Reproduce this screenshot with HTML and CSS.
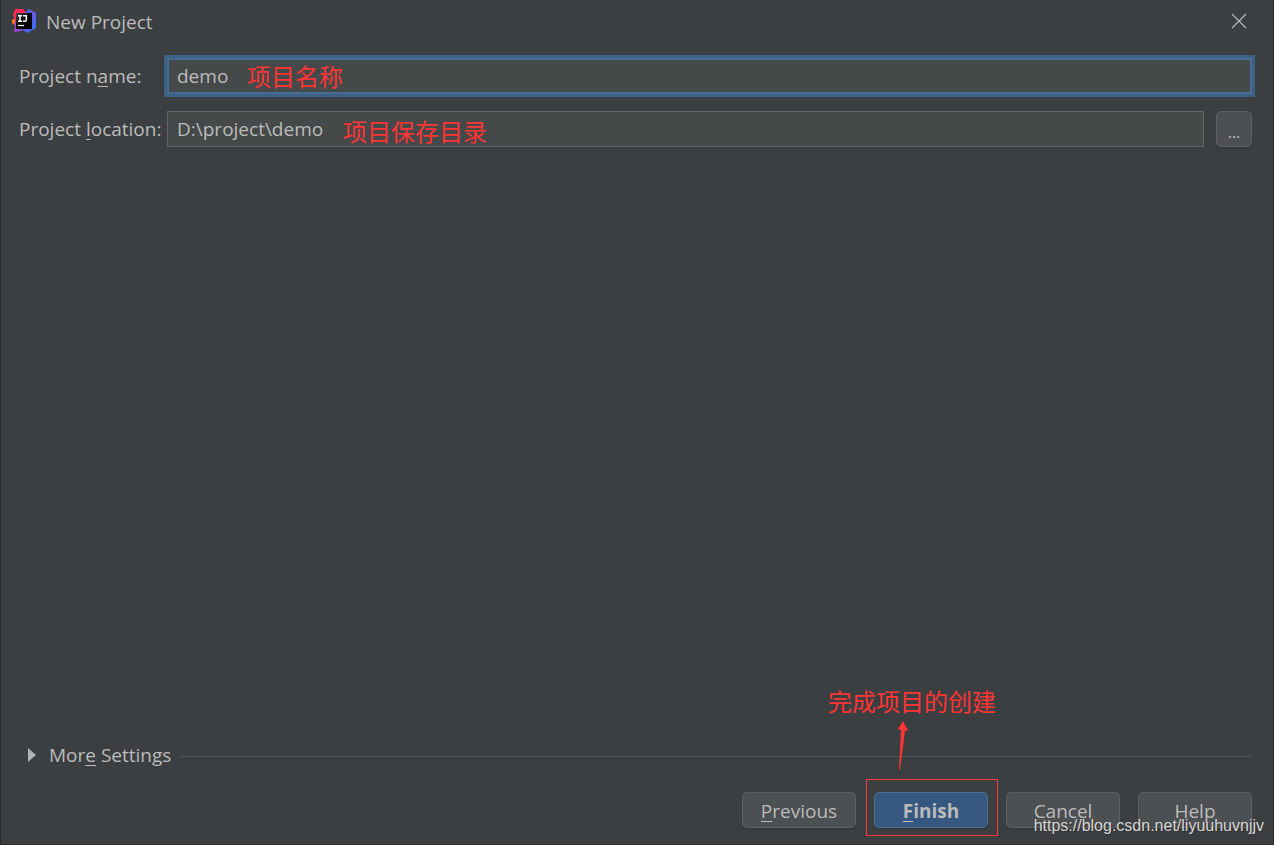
FILE: index.html
```html
<!DOCTYPE html>
<html lang="en">
<head>
<meta charset="utf-8">
<title>New Project</title>
<link rel="stylesheet" href="styles.css">
</head>
<body>
<div class="dialog">
  <header class="titlebar">
    <svg class="logo" viewBox="0 0 24 24" aria-hidden="true">
      <defs>
        <linearGradient id="blue" x1="0" y1="0" x2="1" y2="1"><stop offset="0" stop-color="#3b6cf0"/><stop offset=".5" stop-color="#6b57e8"/><stop offset="1" stop-color="#1f7cf5"/></linearGradient>
        <linearGradient id="purple" x1="0" y1="0" x2="1" y2="1"><stop offset="0" stop-color="#e8358a"/><stop offset=".5" stop-color="#a63fd6"/><stop offset="1" stop-color="#6b57e8"/></linearGradient>
        <linearGradient id="ink" x1="0" y1="0" x2="1" y2="1"><stop offset="0" stop-color="#4a4a4a"/><stop offset=".45" stop-color="#0a0a0a"/><stop offset="1" stop-color="#000"/></linearGradient>
      </defs>
      <path d="M0 11 5 8 6 18 0 14Z" fill="#fc801d"/>
      <path d="M2 13 8 10 14 19 9 22 2 23 3 18Z" fill="url(#purple)"/>
      <path d="M3 0h8l4 5-5 8-7-1-2-6Z" fill="#ff2857"/>
      <path d="M12 5 17 0l7 4v15l-9 5-7-5Z" fill="url(#blue)"/>
      <path d="M4 4h16v16H4Z" fill="url(#ink)"/>
      <path d="M6 6.700h4M8 6.700v5.500M6 12.200h4M11 6.700h3.300v4q0 1.500-1.500 1.500H10.800" fill="none" stroke="#fff" stroke-width="1.500"/>
      <path d="M6 16.500h6" stroke="#fff" stroke-width="1.200"/>
    </svg>
    <h1 class="title">New Project</h1>
    <button class="close" type="button" aria-label="Close">
      <svg class="close-icon" viewBox="0 0 16 16" aria-hidden="true"><path d="M1 1 15 15M15 1 1 15" fill="none" stroke="#b4b4b4" stroke-width="1.300"/></svg>
    </button>
  </header>

  <main class="form">
    <label class="label" for="name">Project n<span class="key">a</span>me:</label>
    <div class="field">
      <input class="input input-focused" id="name" type="text" value="demo">
      <span class="note note-name">项目名称</span>
    </div>
    <label class="label" for="location">Project <span class="key">l</span>ocation:</label>
    <div class="field">
      <input class="input" id="location" type="text" value="D:\project\demo">
      <button class="button browse" type="button" aria-label="Browse">...</button>
      <span class="note note-location">项目保存目录</span>
    </div>
  </main>

  <div class="more">
    <button class="more-toggle" type="button" aria-expanded="false">
      <svg class="arrow" viewBox="0 0 8 14" aria-hidden="true"><path d="M0 0 8 7 0 14Z" fill="#afb1b3"/></svg>
      <span>Mor<span class="key">e</span> Settings</span>
    </button>
    <div class="rule"></div>
  </div>

  <footer class="actions">
    <button class="button" type="button"><span><span class="key">P</span>revious</span></button>
    <div class="finish">
      <button class="button primary" type="button"><span><span class="key">F</span>inish</span></button>
      <div class="frame"></div>
      <span class="note note-finish">完成项目的创建</span>
      <svg class="pointer" viewBox="0 0 12 52" aria-hidden="true"><path d="M6 1 11 10 8 11 3 50 2 50 4 10 1 9Z" fill="#ff3434"/></svg>
    </div>
    <button class="button" type="button">Cancel</button>
    <button class="button" type="button">Help</button>
  </footer>
  <span class="watermark">https://blog.csdn.net/liyuuhuvnjjv</span>
</div>
</body>
</html>
```
FILE: styles.css
```css
* { box-sizing: border-box; }

body {
  margin: 0;
  background: #3c3f41;
  color: #bbbbbb;
  font: 19px/28px "Open Sans", "Noto Sans", "Noto Sans CJK SC", sans-serif;
}

button, input { font: inherit; color: inherit; }

.dialog {
  position: relative;
  display: flex;
  flex-direction: column;
  min-height: 100vh;
  border: solid #2b2b2b;
  border-width: 0 1px 1px;
}

.titlebar {
  display: flex;
  align-items: center;
  height: 44px;
  padding: 0 26px 0 11px;
}
.logo { width: 24px; height: 24px; margin-top: -2px; }
.title { flex: 1; margin: 0 0 0 10px; font-size: 19px; font-weight: 400; }
.close {
  display: flex;
  padding: 0;
  border: 0;
  background: none;
}
.close-icon { width: 16px; height: 16px; margin-top: -2px; }

.form {
  display: grid;
  grid-template-columns: 138px 1fr;
  column-gap: 10px;
  row-gap: 17px;
  align-items: center;
  padding: 14px 21px 0 18px;
}
.label { white-space: nowrap; }
.field { position: relative; display: flex; gap: 12px; }
.input {
  flex: 1;
  min-width: 0;
  height: 36px;
  padding: 0 9px 1px;
  border: 1px solid #646464;
  border-radius: 0;
  background: #45494a;
  outline: none;
}
.input-focused {
  padding: 0 8px;
  border: 2px solid #466d94;
  box-shadow: 0 0 0 3px #3d6185;
}

.key {
  text-decoration: underline;
  text-decoration-thickness: 1px;
  text-underline-offset: 3px;
}

.button {
  display: flex;
  align-items: center;
  justify-content: center;
  width: 114px;
  height: 36px;
  padding: 2px 0 0;
  border: 1px solid #5e6060;
  border-radius: 5px;
  background: #4c5052;
  box-shadow: 0 2px 1px #36393b;
}
.browse { width: 36px; padding-top: 6px; font-size: 16px; }
.primary {
  border-color: #4c708c;
  background: #365880;
  font-weight: 700;
}

.more {
  display: flex;
  align-items: center;
  gap: 8px;
  margin-top: auto;
  padding: 0 21px 0 27px;
}
.more-toggle {
  display: flex;
  align-items: center;
  gap: 13px;
  padding: 0;
  border: 0;
  background: none;
}
.arrow { width: 8px; height: 14px; }
.rule { flex: 1; height: 1px; margin-top: 2px; background: #515151; }

.actions {
  display: flex;
  justify-content: flex-end;
  gap: 18px;
  padding: 23px 21px 16px;
}

.finish { position: relative; }
.frame {
  position: absolute;
  inset: -13px -10px -8px -8px;
  border: 1px solid #ff3434;
  pointer-events: none;
}

.note {
  position: absolute;
  color: #ff3434;
  font: 24px/28px "Noto Sans CJK SC", sans-serif;
  white-space: nowrap;
  pointer-events: none;
}
.note-name { left: 80px; top: 4px; }
.note-location { left: 176px; top: 6px; }
.note-finish { left: -46px; top: -105px; }
.pointer {
  position: absolute;
  left: 23px;
  top: -72px;
  width: 12px;
  height: 52px;
}

.watermark {
  position: absolute;
  right: 9px;
  bottom: 8px;
  color: #d6d6d6;
  font: 16px/20px "Liberation Sans", Arial, sans-serif;
  text-shadow: 1px 1px 1px #333333;
  pointer-events: none;
}
```
